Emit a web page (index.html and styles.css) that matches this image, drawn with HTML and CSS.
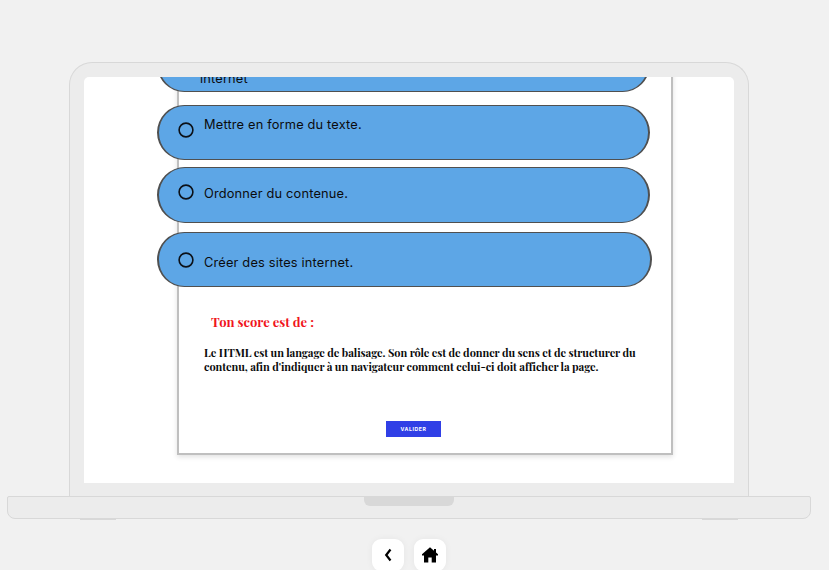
FILE: index.html
```html
<!DOCTYPE html>
<html lang="fr">
<head>
<meta charset="utf-8">
<title>Quiz HTML</title>
<link rel="stylesheet" href="styles.css">
</head>
<body>
<main class="laptop">
  <div class="lid">
    <div class="screen">
      <section class="card">
        <div class="option option-first"><span class="label">internet</span></div>
        <div class="option option-format"><svg class="radio" viewBox="0 0 16 16"><circle cx="8" cy="8" r="6.900"/></svg><span class="label">Mettre en forme du texte.</span></div>
        <div class="option option-order"><svg class="radio" viewBox="0 0 16 16"><circle cx="8" cy="8" r="6.900"/></svg><span class="label">Ordonner du contenue.</span></div>
        <div class="option option-sites"><svg class="radio" viewBox="0 0 16 16"><circle cx="8" cy="8" r="6.900"/></svg><span class="label">Créer des sites internet.</span></div>
        <h2 class="score">Ton score est de :</h2>
        <p class="answer">Le HTML est un langage de balisage. Son rôle est de donner du sens et de structurer du<br>contenu, afin d'indiquer à un navigateur comment celui-ci doit afficher la page.</p>
        <button class="submit">VALIDER</button>
      </section>
    </div>
  </div>
  <div class="base"><div class="notch"></div></div>
  <div class="feet"><span></span><span></span></div>
</main>
<nav class="controls">
  <a class="control"><svg width="32" height="32" viewBox="0 0 32 32"><path d="M18.500 10.500L14.200 16l4.300 5.500" fill="none" stroke="#000" stroke-width="2.200"/></svg></a>
  <a class="control"><svg width="32" height="32" viewBox="0 0 32 32"><path d="M16 8.200L8 15.200v1.300h2V23.500h4.300v-5h3.400v5H22v-7h2v-1.300l-2-1.800V10h-2v1.700z" fill="#000"/></svg></a>
</nav>
</body>
</html>
```
FILE: styles.css
```css
* { box-sizing: border-box; }
body {
  margin: 0;
  height: 570px;
  overflow: hidden;
  background: #f1f1f1;
  font-family: Inter, sans-serif;
}
.laptop {
  width: 804px;
  margin-left: 7px;
  padding-top: 62px;
}
.lid {
  width: 680px;
  height: 434px;
  margin-left: 62px;
  padding: 14px;
  border: 1px solid #d8d8d8;
  border-bottom: 0;
  border-radius: 23px 23px 0 0;
  background: #ececec;
}
.screen {
  display: flex;
  align-items: flex-end;
  height: 406px;
  padding: 0 0 28px 93px;
  overflow: hidden;
  border-radius: 5px 5px 0 0;
  background: #fff;
}
.card {
  flex: none;
  display: flex;
  flex-direction: column;
  width: 496px;
  height: 440px;
  border: 2px solid #bfbfbf;
  box-shadow: 0 2px 5px rgba(0, 0, 0, .12);
}
.option {
  flex: none;
  display: flex;
  align-items: flex-start;
  gap: 10px;
  width: 493px;
  height: 55px;
  margin-left: -22px;
  padding-left: 19px;
  border: 1px solid #505050;
  border-width: 1px 2px;
  border-radius: 28px;
  background: #5da6e6;
}
.label {
  color: #0b0b0d;
  font-size: 12.8px;
  line-height: 18px;
  letter-spacing: .18px;
  white-space: nowrap;
}
.radio {
  flex: none;
  width: 16px;
  height: 16px;
  fill: none;
  stroke: #0c1118;
  stroke-width: 1.6;
}
.option-first { margin-top: 20px; padding: 32px 0 0 41px; }
.option-format { margin-top: 13px; padding-top: 10px; }
.option-format .radio { margin-top: 6px; }
.option-order { height: 56px; margin-top: 7px; padding-top: 16px; }
.option-order .label { margin-top: 1px; }
.option-sites { width: 495px; margin-top: 9px; padding-top: 19px; }
.option-sites .label { margin-top: 2px; }
.score {
  margin: 26px 0 0 32px;
  color: #f01420;
  font: bold 13px/18px "Playfair Display", "Liberation Serif", serif;
}
.answer {
  margin: 15px 0 0 25px;
  color: #0b0b0b;
  font: bold 11px/14px "Playfair Display", "Liberation Serif", serif;
  letter-spacing: -.06px;
  white-space: nowrap;
}
.submit {
  width: 55px;
  height: 16px;
  margin: 47px 0 0 207px;
  padding: 0;
  border: 0;
  background: #303fe6;
  color: #fff;
  font: bold 5.2px/16px Inter, sans-serif;
  letter-spacing: .6px;
}
.base {
  height: 23px;
  border: 1px solid #d8d8d8;
  border-radius: 2px 2px 8px 8px;
  background: #ececec;
}
.notch {
  width: 90px;
  height: 9px;
  margin-left: 356px;
  border-radius: 0 0 6px 6px;
  background: #d8d8d8;
}
.feet {
  display: flex;
  justify-content: space-between;
  padding: 0 73px;
}
.feet span { width: 36px; height: 1px; background: #d8d8d8; }
.controls {
  display: flex;
  gap: 10px;
  margin: 19px 0 0 372px;
}
.control {
  width: 32px;
  height: 32px;
  border-radius: 9px;
  background: #fff;
  box-shadow: 0 0 7px rgba(0, 0, 0, .05);
}
.control svg { display: block; }
```
